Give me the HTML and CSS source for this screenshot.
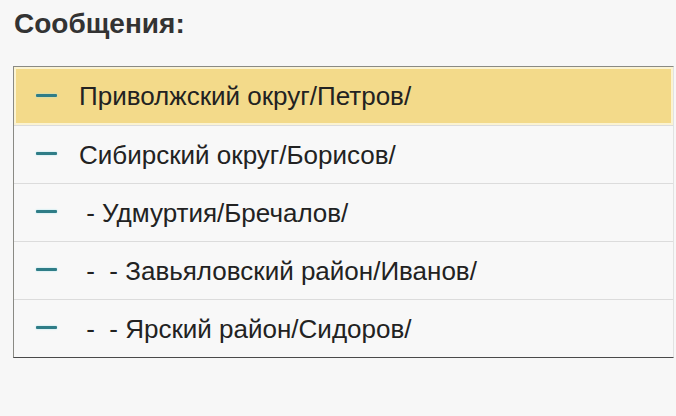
FILE: index.html
```html
<!DOCTYPE html>
<html lang="ru">
<head>
<meta charset="utf-8">
<link rel="stylesheet" href="styles.css">
</head>
<body>
<div class="page">
  <h1 class="title">Сообщения:</h1>
  <div class="list">
    <div class="row selected"><span class="dash"></span><span class="text">Приволжский округ/Петров/</span></div>
    <div class="row"><span class="dash"></span><span class="text">Сибирский округ/Борисов/</span></div>
    <div class="row"><span class="dash"></span><span class="text"> - Удмуртия/Бречалов/</span></div>
    <div class="row"><span class="dash"></span><span class="text"> -  - Завьяловский район/Иванов/</span></div>
    <div class="row"><span class="dash"></span><span class="text"> -  - Ярский район/Сидоров/</span></div>
  </div>
</div>
</body>
</html>
```
FILE: styles.css
```css
html, body {
  margin: 0;
  padding: 0;
  background: #f7f7f7;
}
.page {
  width: 676px;
  height: 416px;
  padding: 8px 0 0 13px;
  box-sizing: border-box;
  font-family: "Liberation Sans", Arial, sans-serif;
}
.title {
  margin: 0;
  font-size: 28px;
  font-weight: bold;
  color: #333;
  line-height: 32px;
  padding-left: 1px;
}
.list {
  margin-top: 26px;
  width: 659px;
  border: 1px solid #8a8a84;
  border-bottom-color: #4a4a4a;
  border-right-color: #e2e2e2;
  background: #f8f8f8;
}
.row {
  height: 58px;
  display: flex;
  align-items: center;
  border-top: 1px solid #dcdcdc;
  box-sizing: border-box;
}
.row:first-child {
  border-top: none;
}
.row.selected {
  background: #f3da8a;
  box-shadow: inset 0 0 0 2px #fbf3d2;
}
.dash {
  display: block;
  flex: none;
  width: 21px;
  height: 3px;
  margin-left: 22px;
  margin-right: 22px;
  margin-top: -2px;
  background: #2f7d87;
  box-shadow: 0 0 2px #9fe0ea;
  border-radius: 1px;
}
.text {
  font-size: 26px;
  color: #222;
  white-space: pre;
  line-height: 30px;
}
```
